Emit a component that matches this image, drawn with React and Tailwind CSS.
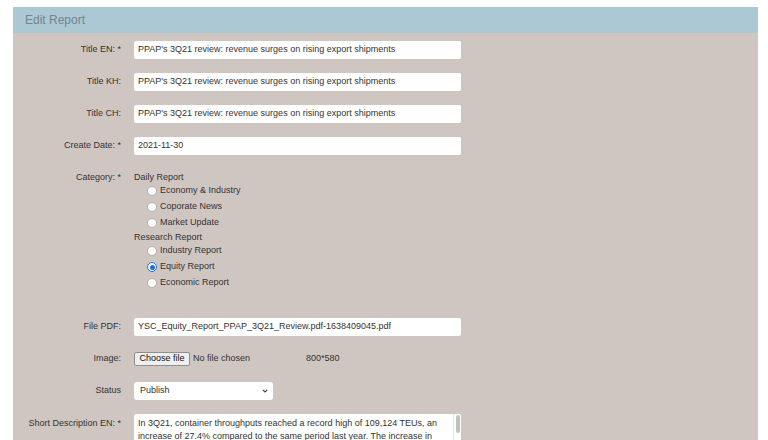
import React from 'react'

const font = { fontFamily: '"Liberation Sans", Arial, sans-serif' }

function Row({ label, children, className = '' }) {
  return (
    <div className={`flex items-center gap-[13px] ${className}`}>
      <div className="w-[108px] shrink-0 text-right text-[9px] text-[#333]">{label}</div>
      {children}
    </div>
  )
}

function TextBox({ value, width = 'w-[327px]' }) {
  return (
    <div className={`h-[18px] ${width} bg-white rounded-[2px] flex items-center px-[4px] text-[9px] text-[#333] whitespace-nowrap overflow-hidden`}>
      {value}
    </div>
  )
}

function Radio({ label, checked }) {
  return (
    <div className="h-[16px] flex items-center pl-[13px] text-[9px] text-[#333]">
      {checked ? (
        <span className="w-[10px] h-[10px] rounded-full border border-[#1a6fe0] bg-white flex items-center justify-center">
          <span className="w-[5px] h-[5px] rounded-full bg-[#1a6fe0]" />
        </span>
      ) : (
        <span className="w-[10px] h-[10px] rounded-full border border-[#b5b0ad] bg-white" />
      )}
      <span className="ml-[3px]">{label}</span>
    </div>
  )
}

export default function App() {
  const title = "PPAP's 3Q21 review: revenue surges on rising export shipments"

  return (
    <div className="w-[768px] h-[440px] overflow-hidden bg-white pt-[7px] pl-[13px]" style={font}>
      <div className="w-[745px] h-[440px] bg-[#cfc6c1]">
        <div className="h-[26px] bg-[#abc8d3] flex items-center pl-[12px] text-[12px] text-[#74868d] font-light">
          Edit Report
        </div>

        <div className="pt-[8px] flex flex-col">
          <Row label="Title EN: *">
            <TextBox value={title} />
          </Row>
          <Row label="Title KH:" className="mt-[14px]">
            <TextBox value={title} />
          </Row>
          <Row label="Title CH:" className="mt-[14px]">
            <TextBox value={title} />
          </Row>
          <Row label="Create Date: *" className="mt-[14px]">
            <TextBox value="2021-11-30" />
          </Row>

          <div className="flex gap-[13px] mt-[16px]">
            <div className="w-[108px] shrink-0 text-right text-[9px] text-[#333] leading-[12px]">Category: *</div>
            <div className="flex flex-col">
              <div className="h-[12px] leading-[12px] text-[9px] text-[#333]">Daily Report</div>
              <Radio label="Economy & Industry" />
              <Radio label="Coporate News" />
              <Radio label="Market Update" />
              <div className="h-[12px] leading-[12px] text-[9px] text-[#333]">Research Report</div>
              <Radio label="Industry Report" />
              <Radio label="Equity Report" checked />
              <Radio label="Economic Report" />
            </div>
          </div>

          <Row label="File PDF:" className="mt-[27px]">
            <TextBox value="YSC_Equity_Report_PPAP_3Q21_Review.pdf-1638409045.pdf" />
          </Row>

          <Row label="Image:" className="mt-[14px] h-[18px]">
            <div className="flex items-center text-[9px] text-[#333]">
              <span className="h-[14px] w-[56px] flex items-center justify-center bg-[#efefef] border border-[#8f8f8f] rounded-[2px] text-[#111]">
                Choose file
              </span>
              <span className="ml-[3px]">No file chosen</span>
              <span className="ml-[56px]">800*580</span>
            </div>
          </Row>

          <Row label="Status" className="mt-[14px]">
            <div className="h-[18px] w-[139px] bg-white rounded-[3px] flex items-center justify-between pl-[6px] pr-[5px] text-[9px] text-[#333]">
              <span>Publish</span>
              <svg width="6" height="4" viewBox="0 0 6 4">
                <path d="M0.8 0.8 L3 3 L5.2 0.8" fill="none" stroke="#444" strokeWidth="1.1" />
              </svg>
            </div>
          </Row>

          <div className="flex gap-[13px] mt-[14px]">
            <div className="w-[108px] shrink-0 text-right text-[9px] text-[#333] pt-[3px] leading-[13px]">
              Short Description EN: *
            </div>
            <div className="w-[327px] h-[60px] bg-white rounded-[2px] flex">
              <div className="flex-1 pl-[4px] pr-[6px] pt-[3px]">
                <div className="h-[26px] overflow-hidden text-[9px] leading-[13px] text-[#333]">
                  In 3Q21, container throughputs reached a record high of 109,124 TEUs, an increase of 27.4% compared to the same period last year. The increase in
                </div>
              </div>
              <div className="w-[8px] border-l border-[#e4e4e4] pt-[1px] flex justify-center">
                <div className="w-[4px] h-[18px] rounded-full bg-[#c1c1c1]" />
              </div>
            </div>
          </div>
        </div>
      </div>
    </div>
  )
}
